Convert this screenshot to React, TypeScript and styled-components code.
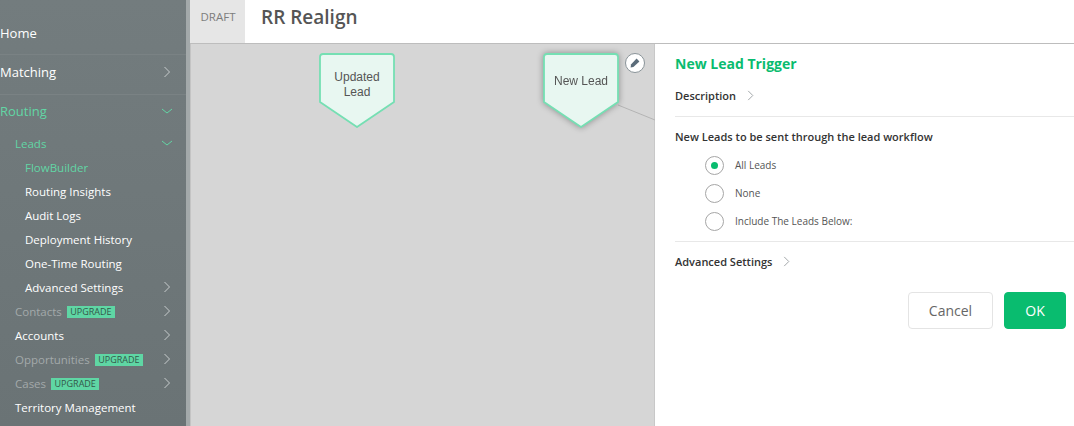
import React from "react";
import styled, { createGlobalStyle } from "styled-components";

const GlobalStyle = createGlobalStyle`
  html, body {
    margin: 0;
    padding: 0;
    background: #ffffff;
    font-family: "Open Sans", "Liberation Sans", sans-serif;
  }
`;

const Page = styled.div`
  display: flex;
  width: 1074px;
  height: 426px;
  overflow: hidden;
`;

const Sidebar = styled.nav`
  flex: 0 0 190px;
  height: 426px;
  box-sizing: border-box;
  padding-top: 15px;
  background: linear-gradient(#737c7e, #6a7375);
  border-right: 4px solid #a3a9aa;
  overflow: hidden;
`;

const TopRow = styled.div<{ $active?: boolean; $divider?: boolean; $height?: number; $lift?: number }>`
  display: flex;
  align-items: center;
  justify-content: space-between;
  box-sizing: border-box;
  height: ${(p) => p.$height ?? 40}px;
  padding-right: 13px;
  padding-bottom: ${(p) => p.$lift ?? 4}px;
  font-size: 13px;
  font-weight: 400;
  color: ${(p) => (p.$active ? "#62d6a5" : "#ffffff")};
  border-bottom: 1px solid ${(p) => (p.$divider ? "#7a8284" : "transparent")};
`;

const SubRow = styled.div<{ $level: number; $tone?: "green" | "muted" }>`
  display: flex;
  align-items: center;
  height: 24px;
  padding-left: ${(p) => (p.$level === 2 ? 25 : 15)}px;
  padding-right: 13px;
  font-size: 11.5px;
  color: ${(p) =>
    p.$tone === "green" ? "#62d6a5" : p.$tone === "muted" ? "#a3a9aa" : "#ffffff"};
`;

const RowLabel = styled.span`
  white-space: nowrap;
`;

const Spacer = styled.span`
  flex: 1;
`;

const UpgradeBadge = styled.span`
  margin: 2px 0 0 5px;
  height: 12px;
  padding: 0 3.5px;
  background: #5fd6a4;
  color: #35574a;
  font-size: 9px;
  line-height: 12px;
`;

const Main = styled.div`
  flex: 1;
  display: flex;
  flex-direction: column;
  min-width: 0;
`;

const Header = styled.header`
  display: flex;
  align-items: stretch;
  height: 43px;
  border-bottom: 1px solid #bdbdbd;
`;

const DraftTab = styled.div`
  width: 55px;
  display: flex;
  align-items: center;
  justify-content: center;
  box-sizing: border-box;
  padding: 0 0 10px 1px;
  background: #e6e6e6;
  color: #7d7d7d;
  font-size: 11.5px;
`;

const Title = styled.h1`
  margin: 0 0 0 16px;
  font-size: 19px;
  font-weight: 600;
  line-height: 34px;
  color: #555555;
`;

const Body = styled.div`
  flex: 1;
  display: flex;
  min-height: 0;
`;

const Canvas = styled.div`
  position: relative;
  flex: 0 0 465px;
  box-sizing: border-box;
  background: #d6d6d6;
  border-left: 1px solid #c4c4c4;
  border-right: 1px solid #c8c8c8;
`;

const Edge = styled.svg`
  position: absolute;
  left: 427px;
  top: 60px;
`;

const Node = styled.div<{ $x: number; $selected?: boolean }>`
  position: absolute;
  left: ${(p) => p.$x}px;
  top: 9px;
  width: 76px;
  height: 75px;
  ${(p) => p.$selected && "filter: drop-shadow(0 0 3px rgba(0, 0, 0, 0.35));"}
`;

const NodeShape = styled.svg`
  display: block;
`;

const NodeLabel = styled.div<{ $top: number }>`
  position: absolute;
  left: 0;
  right: 0;
  top: ${(p) => p.$top}px;
  height: 30px;
  display: flex;
  align-items: center;
  justify-content: center;
  text-align: center;
  font-family: "Liberation Sans", Arial, sans-serif;
  font-size: 12px;
  line-height: 15px;
  color: #555555;
`;

const EditButton = styled.div`
  position: absolute;
  left: 434px;
  top: 9px;
  width: 20px;
  height: 20px;
  display: flex;
  align-items: center;
  justify-content: center;
  box-sizing: border-box;
  border-radius: 50%;
  background: #ffffff;
  border: 1px solid #8a9499;
`;

const Panel = styled.section`
  flex: 1;
  padding-left: 20px;
  min-width: 0;
`;

const PanelTitle = styled.h2`
  margin: 0;
  padding-top: 10px;
  height: 27px;
  font-size: 14px;
  line-height: 20px;
  font-weight: 700;
  color: #09bc6f;
`;

const Expander = styled.div<{ $height: number; $lift: number }>`
  display: flex;
  align-items: center;
  gap: 9px;
  box-sizing: border-box;
  height: ${(p) => p.$height}px;
  padding-bottom: ${(p) => p.$lift}px;
  font-size: 11px;
  font-weight: 600;
  color: #333333;
`;

const Rule = styled.hr`
  margin: 0;
  border: 0;
  border-top: 1px solid #e8e8e8;
`;

const Question = styled.div`
  padding-top: 12px;
  height: 24px;
  font-size: 11px;
  line-height: 16px;
  font-weight: 600;
  color: #333333;
`;

const RadioList = styled.div`
  display: flex;
  flex-direction: column;
  gap: 9px;
  padding: 3px 0 10px 30px;
`;

const RadioRow = styled.label`
  display: flex;
  align-items: center;
  gap: 11px;
  height: 19px;
  font-size: 10px;
  color: #555555;
`;

const RadioText = styled.span`
  padding-bottom: 2px;
`;

const RadioCircle = styled.span<{ $checked?: boolean }>`
  width: 19px;
  height: 19px;
  box-sizing: border-box;
  border-radius: 50%;
  border: 1px solid #a6a6a6;
  background: #ffffff;
  display: flex;
  align-items: center;
  justify-content: center;

  &::after {
    content: "";
    display: ${(p) => (p.$checked ? "block" : "none")};
    width: 7px;
    height: 7px;
    border-radius: 50%;
    background: #09bc6f;
  }
`;

const Actions = styled.div`
  display: flex;
  justify-content: flex-end;
  gap: 11px;
  padding: 10px 8px 0 0;
`;

const Button = styled.button<{ $primary?: boolean }>`
  height: 37px;
  width: ${(p) => (p.$primary ? 62 : 85)}px;
  padding: 0;
  box-sizing: border-box;
  border-radius: 4px;
  border: 1px solid ${(p) => (p.$primary ? "#09bc6f" : "#e4e4e4")};
  background: ${(p) => (p.$primary ? "#09bc6f" : "#ffffff")};
  color: ${(p) => (p.$primary ? "#ffffff" : "#666666")};
  font-family: inherit;
  font-size: 14px;
`;

const ChevronRight = ({ color = "#c8cdce", size = 12 }: { color?: string; size?: number }) => (
  <svg width={size} height={size} viewBox="0 0 12 12" fill="none">
    <path d="M3.5 1 L8.5 6 L3.5 11" stroke={color} strokeWidth="1" />
  </svg>
);

const ChevronDown = () => (
  <svg width="12" height="12" viewBox="0 0 12 12" fill="none">
    <path d="M1 4 L6 8 L11 4" stroke="#62d6a5" strokeWidth="1" />
  </svg>
);

const Pentagon = () => (
  <NodeShape width="76" height="75" viewBox="0 0 76 75">
    <path
      d="M4 1 H72 Q75 1 75 4 V49 L38 74 L1 49 V4 Q1 1 4 1 Z"
      fill="#e8f7f1"
      stroke="#75dfb3"
      strokeWidth="1.8"
      strokeLinejoin="round"
    />
  </NodeShape>
);

const subItems = ["Routing Insights", "Audit Logs", "Deployment History", "One-Time Routing"];

export default function App() {
  return (
    <Page>
      <GlobalStyle />
      <Sidebar>
        <TopRow $divider>
          <RowLabel>Home</RowLabel>
        </TopRow>
        <TopRow $divider $lift={6}>
          <RowLabel>Matching</RowLabel>
          <ChevronRight />
        </TopRow>
        <TopRow $active $height={36}>
          <RowLabel>Routing</RowLabel>
          <ChevronDown />
        </TopRow>
        <SubRow $level={1} $tone="green">
          <RowLabel>Leads</RowLabel>
          <Spacer />
          <ChevronDown />
        </SubRow>
        <SubRow $level={2} $tone="green">
          <RowLabel>FlowBuilder</RowLabel>
        </SubRow>
        {subItems.map((item) => (
          <SubRow $level={2} key={item}>
            <RowLabel>{item}</RowLabel>
          </SubRow>
        ))}
        <SubRow $level={2}>
          <RowLabel>Advanced Settings</RowLabel>
          <Spacer />
          <ChevronRight />
        </SubRow>
        <SubRow $level={1} $tone="muted">
          <RowLabel>Contacts</RowLabel>
          <UpgradeBadge>UPGRADE</UpgradeBadge>
          <Spacer />
          <ChevronRight />
        </SubRow>
        <SubRow $level={1}>
          <RowLabel>Accounts</RowLabel>
          <Spacer />
          <ChevronRight />
        </SubRow>
        <SubRow $level={1} $tone="muted">
          <RowLabel>Opportunities</RowLabel>
          <UpgradeBadge>UPGRADE</UpgradeBadge>
          <Spacer />
          <ChevronRight />
        </SubRow>
        <SubRow $level={1} $tone="muted">
          <RowLabel>Cases</RowLabel>
          <UpgradeBadge>UPGRADE</UpgradeBadge>
          <Spacer />
          <ChevronRight />
        </SubRow>
        <SubRow $level={1}>
          <RowLabel>Territory Management</RowLabel>
        </SubRow>
      </Sidebar>
      <Main>
        <Header>
          <DraftTab>DRAFT</DraftTab>
          <Title>RR Realign</Title>
        </Header>
        <Body>
          <Canvas>
            <Edge width="37" height="18" viewBox="0 0 37 18">
              <path d="M0 1 L37 16" stroke="#b4b4b4" strokeWidth="1" />
            </Edge>
            <Node $x={128}>
              <Pentagon />
              <NodeLabel $top={17}>
                Updated
                <br />
                Lead
              </NodeLabel>
            </Node>
            <Node $x={352} $selected>
              <Pentagon />
              <NodeLabel $top={13}>New Lead</NodeLabel>
            </Node>
            <EditButton>
              <svg width="12" height="12" viewBox="0 0 12 12">
                <path d="M7.6 1.6 L10.4 4.4 L4.4 10 L1.6 10.4 L2 7.6 Z" fill="#5b6c7a" />
              </svg>
            </EditButton>
          </Canvas>
          <Panel>
            <PanelTitle>New Lead Trigger</PanelTitle>
            <Expander $height={35} $lift={7}>
              Description
              <ChevronRight size={11} color="#9aa0a2" />
            </Expander>
            <Rule />
            <Question>New Leads to be sent through the lead workflow</Question>
            <RadioList>
              <RadioRow>
                <RadioCircle $checked />
                <RadioText>All Leads</RadioText>
              </RadioRow>
              <RadioRow>
                <RadioCircle />
                <RadioText>None</RadioText>
              </RadioRow>
              <RadioRow>
                <RadioCircle />
                <RadioText>Include The Leads Below:</RadioText>
              </RadioRow>
            </RadioList>
            <Rule />
            <Expander $height={40} $lift={2}>
              Advanced Settings
              <ChevronRight size={11} color="#9aa0a2" />
            </Expander>
            <Actions>
              <Button>Cancel</Button>
              <Button $primary>OK</Button>
            </Actions>
          </Panel>
        </Body>
      </Main>
    </Page>
  );
}
